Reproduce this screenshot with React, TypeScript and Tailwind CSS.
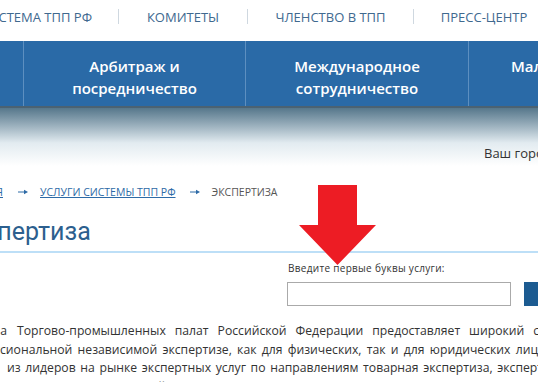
import React from "react";

function Sep() {
  return <div className="w-px h-[15px] bg-[#cfd8e0] mt-[9px] shrink-0" />;
}

function BcArrow() {
  return (
    <svg width="10" height="6" viewBox="0 0 10 6" className="shrink-0">
      <path d="M0 3 H7" stroke="#2d6aa6" strokeWidth="1" />
      <path d="M6 0.8 L10 3 L6 5.2 Z" fill="#2d6aa6" />
    </svg>
  );
}

function Line({
  prefix,
  prefixEnd,
  gap,
  rest,
  ws,
}: {
  prefix: string;
  prefixEnd: string;
  gap: string;
  rest: string;
  ws: string;
}) {
  return (
    <div className="flex whitespace-nowrap h-[18.5px]">
      <div className={`${prefixEnd} shrink-0 flex justify-end`}>
        <span className="shrink-0">{prefix}</span>
      </div>
      <span className={`${gap} ${ws} shrink-0`}>{rest}</span>
    </div>
  );
}

export default function App() {
  return (
    <div className="relative w-[538px] h-[382px] overflow-hidden bg-white font-['Open_Sans',sans-serif]">
      {/* top nav */}
      <div className="h-[41px] flex items-start -ml-[40px] text-[13px] leading-[18px] uppercase text-[#40698f] whitespace-nowrap">
        <div className="w-[158px] shrink-0 text-right pr-[26px] pt-[8px]">Система ТПП РФ</div>
        <Sep />
        <div className="w-[128px] shrink-0 text-center pt-[8px]">Комитеты</div>
        <Sep />
        <div className="w-[165px] shrink-0 text-center pt-[8px]">Членство в ТПП</div>
        <Sep />
        <div className="w-[140px] shrink-0 text-center pt-[8px]">Пресс-центр</div>
        <Sep />
      </div>

      {/* blue menu bar */}
      <div className="h-[65px] bg-[#2a6aa7] flex -ml-[199px] text-white font-semibold text-[15px] leading-[22px] whitespace-nowrap">
        <div className="w-[222px] shrink-0" />
        <div className="w-[222px] shrink-0 border-l border-[#5d8fc0] text-center pt-[14px]">
          Арбитраж и
          <br />
          посредничество
        </div>
        <div className="w-[223px] shrink-0 border-l border-[#5d8fc0] text-center pt-[14px]">
          Международное
          <br />
          сотрудничество
        </div>
        <div className="w-[222px] shrink-0 border-l border-[#5d8fc0] pt-[14px]">
          <div className="pl-[42px]">Малое и среднее</div>
          <div className="text-center">бизнес</div>
        </div>
      </div>

      {/* gradient area */}
      <div className="h-[60px] border-t-2 border-[#4b6272] bg-gradient-to-b from-[#56778b] via-[#e2ebf0] via-60% to-white pt-[36px] pl-[484px] text-[13px] leading-[18px] text-[#333] whitespace-nowrap">
        Ваш город: Москва
      </div>

      {/* breadcrumbs */}
      <div className="mt-[17px] h-[18px] flex items-center text-[10.5px] leading-[18px] uppercase whitespace-nowrap">
        <div className="w-[3px] shrink-0 flex justify-end">
          <span className="underline text-[#2d6aa6] shrink-0">Главная</span>
        </div>
        <div className="ml-[15px]">
          <BcArrow />
        </div>
        <span className="underline text-[#2d6aa6] ml-[12px] mr-[14px]">Услуги системы ТПП РФ</span>
        <BcArrow />
        <span className="text-[#555] ml-[12px]">Экспертиза</span>
      </div>

      {/* heading */}
      <h1 className="mt-[14px] h-[34px] -ml-[46px] font-['Roboto',sans-serif] text-[25px] leading-[34px] text-[#2c5f8e] whitespace-nowrap">
        Экспертиза
      </h1>

      <div className="mt-[2px] h-[2px] bg-[#bddff7]" />

      {/* search form */}
      <div className="mt-[8px] pl-[288px] text-[10px] leading-[14px] text-[#333] tracking-[0.3px] whitespace-nowrap">
        Введите первые буквы услуги:
      </div>
      <div className="mt-[7px] flex pl-[287px]">
        <div className="w-[224px] h-[24px] border border-[#aaaaaa] bg-white shrink-0" />
        <div className="ml-[13px] w-[80px] h-[24px] bg-[#1c5b91] shrink-0" />
      </div>

      {/* body text */}
      <div className="mt-[16px] text-[12.2px] leading-[18.5px] text-[#333]">
        <Line
          prefix="Система"
          prefixEnd="w-[7px]"
          gap="ml-[10px]"
          ws="[word-spacing:5.8px]"
          rest="Торгово-промышленных палат Российской Федерации предоставляет широкий спектр услуг"
        />
        <Line
          prefix="профес"
          prefixEnd="w-[0px]"
          gap="ml-[0px]"
          ws="[word-spacing:2.1px]"
          rest="сиональной независимой экспертизе, как для физических, так и для юридических лиц и является"
        />
        <Line
          prefix="одним"
          prefixEnd="w-[0px]"
          gap="ml-[7px]"
          ws="[word-spacing:1.5px]"
          rest="из лидеров на рынке экспертных услуг по направлениям товарная экспертиза, экспертиза для"
        />
        <Line
          prefix="происх"
          prefixEnd="w-[3px]"
          gap="ml-[0px]"
          ws="[word-spacing:3.5px]"
          rest="ождения товаров, сюрвейерская экспертиза (инспекционные услуги), экспертиза, проводимая"
        />
      </div>

      {/* red arrow overlay */}
      <svg
        className="absolute left-[299px] top-[185px]"
        width="77"
        height="80"
        viewBox="0 0 77 80"
      >
        <polygon points="19,0 58,0 58,40 77,40 38.5,80 0,40 19,40" fill="#ed1c24" />
      </svg>
    </div>
  );
}
